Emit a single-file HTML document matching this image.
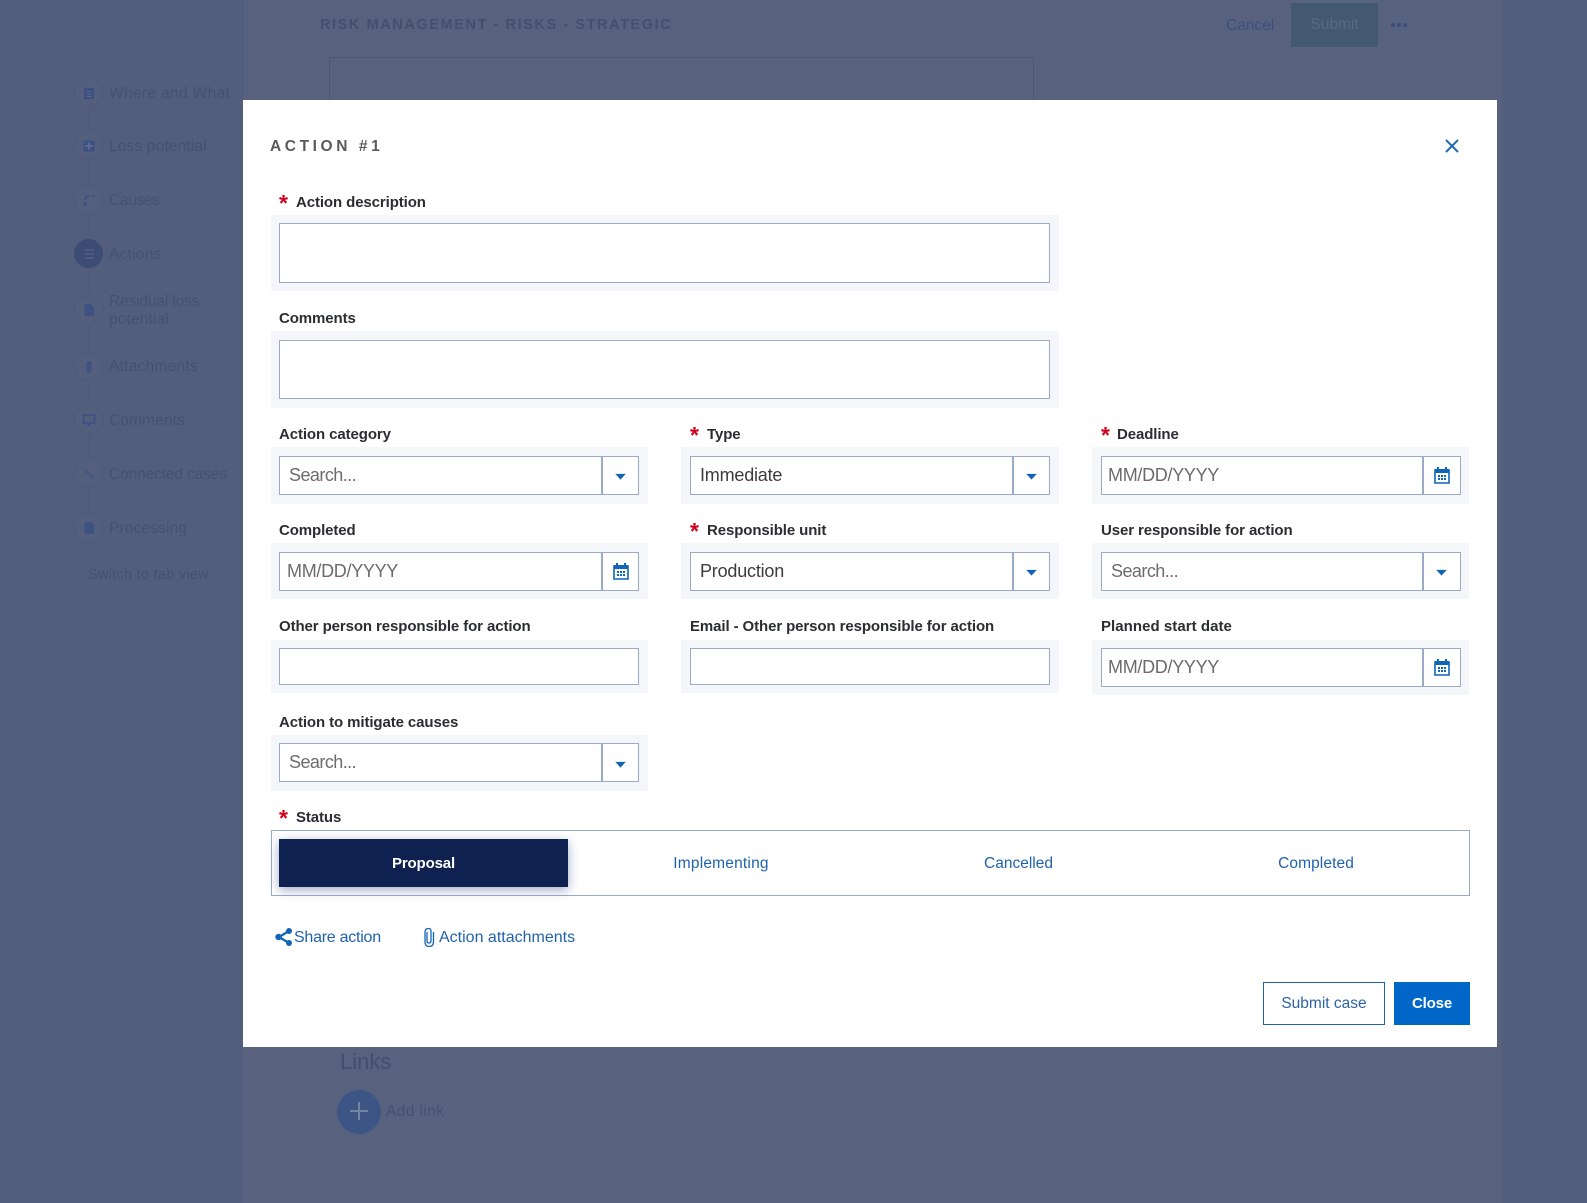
<!DOCTYPE html>
<html lang="en"><head><meta charset="utf-8"><title>Action #1</title>
<style>
*{box-sizing:border-box}
html,body{margin:0;padding:0;width:1587px;height:1203px;overflow:hidden;background:#535e7d;font-family:"Liberation Sans",sans-serif}
.a{position:absolute;white-space:nowrap}
.bgt{color:#465171;font-size:15.5px;line-height:18px;letter-spacing:.15px;margin-top:1px}
.c{position:absolute;left:74px;width:29px;height:29px;border-radius:50%;border:1px solid #4f5a7a;background:#545f7e}
.c svg{left:7px;top:7px}
.l{position:absolute;white-space:nowrap;font-size:15px;line-height:18px;font-weight:bold;color:#2b2d33;letter-spacing:-.1px;margin-top:1px}
.s{position:absolute;color:#d0021b;font-weight:bold;font-size:23px;line-height:22px;width:12px;margin-top:-2px}
.w{position:absolute;background:#f4f6fa}
.i{position:absolute;background:#fff;border:1px solid #9aabc8}
.d{position:absolute;top:0;bottom:0;width:2px;background:#9aabc8}
.p{position:absolute;white-space:nowrap;font-size:18px;line-height:22px;color:#6c6c6c;letter-spacing:-.55px}
.m{letter-spacing:-.3px}
.v{color:#3c3c3c;letter-spacing:-.2px}
.t{position:absolute;white-space:nowrap;font-size:15.5px;line-height:18px;color:#1f62ad;text-align:center;margin-top:1px}
svg{position:absolute;display:block}
</style></head><body>
<div class="a" style="left:243px;top:0;width:1259px;height:1203px;background:#58627f"></div>
<div class="a" style="left:243px;top:0;width:1px;height:100px;background:#525d7c"></div>
<div class="a" style="left:320px;top:16px;font-size:14.5px;line-height:18px;font-weight:bold;letter-spacing:1.58px;color:#454e6d">RISK MANAGEMENT - RISKS - STRATEGIC</div>
<div class="a" style="left:329px;top:57px;width:705px;height:44px;border:1px solid #4c5776"></div>
<div class="a bgt" style="left:1226px;top:16px;color:#3d4f7e;letter-spacing:0">Cancel</div>
<div class="a" style="left:1291px;top:3px;width:87px;height:44px;background:#43596f;color:#5b6984;font-size:15.5px;line-height:44px;text-align:center">Submit</div>
<div class="a" style="left:1391px;top:23px;width:4px;height:4px;border-radius:50%;background:#3d4f7e"></div>
<div class="a" style="left:1397px;top:23px;width:4px;height:4px;border-radius:50%;background:#3d4f7e"></div>
<div class="a" style="left:1403px;top:23px;width:4px;height:4px;border-radius:50%;background:#3d4f7e"></div>

<div class="a" style="left:88px;top:92px;width:1px;height:435px;background:#4f5a7a"></div>
<div class="c" style="top:78px"><svg width="14" height="14" viewBox="0 0 14 14"><path d="M2 2H12V13H2Z" fill="#3d5283"/><path d="M4.500 5.500H9.500M4.500 8H9.500M4.500 10.500H9.500" stroke="#56648a" stroke-width="1"/></svg></div>
<div class="c" style="top:131px"><svg width="14" height="14" viewBox="0 0 14 14"><path d="M1.500 1.500H12.500V12.500H1.500Z" fill="#3d5283"/><path d="M7 3.500V10.500M3.500 7H10.500" stroke="#5f6c90" stroke-width="2"/></svg></div>
<div class="c" style="top:185px"><svg width="14" height="14" viewBox="0 0 14 14"><circle cx="3" cy="11" r="2" fill="#3d5283"/><path d="M3 7Q3 3 8 3" stroke="#3d5283" stroke-width="1.500" fill="none"/><path d="M9 1.500H13V4.500H9Z" fill="#47587f"/></svg></div>
<div class="c" style="top:239px;background:#3d4c74;border-color:#3d4c74"><svg width="14" height="14" viewBox="0 0 14 14"><path d="M3 3H12M3 7H12M3 11H12" stroke="#56648a" stroke-width="1.300"/></svg></div>
<div class="c" style="top:295px"><svg width="14" height="14" viewBox="0 0 14 14"><path d="M2.500 1H9L12 4V13H2.500Z" fill="#3d5283"/></svg></div>
<div class="c" style="top:352px"><svg width="14" height="14" viewBox="0 0 14 14"><path d="M5 4V10Q5 12.500 7 12.500Q9 12.500 9 10V3.500Q9 1.500 7 1.500Q5 1.500 5 4" fill="#3f5180" stroke="#3f5180"/></svg></div>
<div class="c" style="top:405px"><svg width="14" height="14" viewBox="0 0 14 14"><path d="M1.500 2H12.500V10H8L7 12L6 10H1.500Z" fill="none" stroke="#3d5283" stroke-width="2"/></svg></div>
<div class="c" style="top:459px"><svg width="14" height="14" viewBox="0 0 14 14"><path d="M3 3.500L11 10.500" stroke="#46577f" stroke-width="2"/><circle cx="9.500" cy="9.500" r="2.500" fill="#46577f"/></svg></div>
<div class="c" style="top:513px"><svg width="14" height="14" viewBox="0 0 14 14"><path d="M2.500 1H9L12 4V13H2.500Z" fill="#3d5283"/></svg></div>
<div class="a bgt" style="left:109px;top:84px;letter-spacing:.35px">Where and What</div>
<div class="a bgt" style="left:109px;top:137px">Loss potential</div>
<div class="a bgt" style="left:109px;top:191px;letter-spacing:-.35px">Causes</div>
<div class="a bgt" style="left:109px;top:245px;letter-spacing:.25px">Actions</div>
<div class="a bgt" style="left:109px;top:292px;letter-spacing:-.15px">Residual loss</div>
<div class="a bgt" style="left:109px;top:310px">potential</div>
<div class="a bgt" style="left:109px;top:357px;letter-spacing:.25px">Attachments</div>
<div class="a bgt" style="left:109px;top:411px">Comments</div>
<div class="a bgt" style="left:109px;top:465px;letter-spacing:-.12px">Connected cases</div>
<div class="a bgt" style="left:109px;top:519px">Processing</div>
<div class="a bgt" style="left:88px;top:565px;font-size:14.5px;letter-spacing:.27px">Switch to tab view</div>

<div class="a" style="left:340px;top:1049px;font-size:22px;line-height:26px;color:#434d6e">Links</div>
<div class="a" style="left:337px;top:1090px;width:44px;height:44px;border-radius:50%;background:#3c5585"></div>
<div class="a" style="left:350px;top:1110px;width:18px;height:2px;background:#76849f"></div>
<div class="a" style="left:358px;top:1102px;width:2px;height:18px;background:#76849f"></div>
<div class="a bgt" style="left:386px;top:1102px;letter-spacing:.4px">Add link</div>

<!-- modal -->
<div class="a" style="left:243px;top:100px;width:1254px;height:947px;background:#fff"></div>
<div class="a" style="left:270px;top:138px;font-size:15.5px;line-height:18px;font-weight:bold;letter-spacing:3.6px;color:#5a5a5e">ACTION #1</div>
<svg style="left:1445px;top:139px" width="14" height="14" viewBox="0 0 14 14"><path d="M1 1L13 13M13 1L1 13" stroke="#1f6bb5" stroke-width="2" fill="none"/></svg>

<div class="s" style="left:279px;top:194px">*</div>
<div class="l" style="left:296px;top:193px">Action description</div>
<div class="w" style="left:271px;top:215px;width:788px;height:76px"></div>
<div class="i" style="left:279px;top:223px;width:771px;height:60px"></div>

<div class="l" style="left:279px;top:309px">Comments</div>
<div class="w" style="left:271px;top:331px;width:788px;height:77px"></div>
<div class="i" style="left:279px;top:340px;width:771px;height:59px"></div>

<!-- Row 1 -->
<div class="l" style="left:279px;top:425px">Action category</div>
<div class="w" style="left:271px;top:447px;width:377px;height:57px"></div>
<div class="i" style="left:279px;top:456px;width:360px;height:39px"><div class="d" style="left:321px"></div></div>
<div class="p" style="left:289px;top:464px">Search...</div>
<svg style="left:615px;top:473px" width="11" height="7" viewBox="0 0 12 8"><path d="M0 1H12L6 7.500Z" fill="#1165b8"/></svg>

<div class="s" style="left:690px;top:426px">*</div>
<div class="l" style="left:707px;top:425px">Type</div>
<div class="w" style="left:681px;top:447px;width:378px;height:57px"></div>
<div class="i" style="left:690px;top:456px;width:360px;height:39px"><div class="d" style="left:321px"></div></div>
<div class="p v" style="left:700px;top:464px">Immediate</div>
<svg style="left:1026px;top:473px" width="11" height="7" viewBox="0 0 12 8"><path d="M0 1H12L6 7.500Z" fill="#1165b8"/></svg>

<div class="s" style="left:1101px;top:426px">*</div>
<div class="l" style="left:1117px;top:425px">Deadline</div>
<div class="w" style="left:1092px;top:447px;width:377px;height:57px"></div>
<div class="i" style="left:1101px;top:456px;width:360px;height:39px"><div class="d" style="left:320px"></div></div>
<div class="p m" style="left:1108px;top:464px">MM/DD/YYYY</div>
<svg style="left:1434px;top:466px" width="16" height="18" viewBox="0 0 16 18"><path d="M1 4H15V17H1Z" fill="none" stroke="#1165b8" stroke-width="1.600"/><path d="M1 3H15V7H1Z" fill="#1165b8"/><path d="M4 1V4M12 1V4" stroke="#1165b8" stroke-width="2"/><path d="M4 9h2v2H4zM7 9h2v2H7zM10 9h2v2h-2zM4 12h2v2H4zM7 12h2v2H7zM10 12h2v2h-2z" fill="#1165b8"/></svg>

<!-- Row 2 -->
<div class="l" style="left:279px;top:521px">Completed</div>
<div class="w" style="left:271px;top:543px;width:377px;height:56px"></div>
<div class="i" style="left:279px;top:552px;width:360px;height:39px"><div class="d" style="left:321px"></div></div>
<div class="p m" style="left:287px;top:560px">MM/DD/YYYY</div>
<svg style="left:613px;top:562px" width="16" height="18" viewBox="0 0 16 18"><path d="M1 4H15V17H1Z" fill="none" stroke="#1165b8" stroke-width="1.600"/><path d="M1 3H15V7H1Z" fill="#1165b8"/><path d="M4 1V4M12 1V4" stroke="#1165b8" stroke-width="2"/><path d="M4 9h2v2H4zM7 9h2v2H7zM10 9h2v2h-2zM4 12h2v2H4zM7 12h2v2H7zM10 12h2v2h-2z" fill="#1165b8"/></svg>

<div class="s" style="left:690px;top:522px">*</div>
<div class="l" style="left:707px;top:521px">Responsible unit</div>
<div class="w" style="left:681px;top:543px;width:378px;height:56px"></div>
<div class="i" style="left:690px;top:552px;width:360px;height:39px"><div class="d" style="left:321px"></div></div>
<div class="p v" style="left:700px;top:560px">Production</div>
<svg style="left:1026px;top:569px" width="11" height="7" viewBox="0 0 12 8"><path d="M0 1H12L6 7.500Z" fill="#1165b8"/></svg>

<div class="l" style="left:1101px;top:521px">User responsible for action</div>
<div class="w" style="left:1092px;top:543px;width:377px;height:56px"></div>
<div class="i" style="left:1101px;top:552px;width:360px;height:39px"><div class="d" style="left:320px"></div></div>
<div class="p" style="left:1111px;top:560px">Search...</div>
<svg style="left:1436px;top:569px" width="11" height="7" viewBox="0 0 12 8"><path d="M0 1H12L6 7.500Z" fill="#1165b8"/></svg>

<!-- Row 3 -->
<div class="l" style="left:279px;top:617px">Other person responsible for action</div>
<div class="w" style="left:271px;top:640px;width:377px;height:53px"></div>
<div class="i" style="left:279px;top:648px;width:360px;height:37px"></div>

<div class="l" style="left:690px;top:617px">Email - Other person responsible for action</div>
<div class="w" style="left:681px;top:640px;width:378px;height:53px"></div>
<div class="i" style="left:690px;top:648px;width:360px;height:37px"></div>

<div class="l" style="left:1101px;top:617px;letter-spacing:.05px">Planned start date</div>
<div class="w" style="left:1092px;top:640px;width:377px;height:55px"></div>
<div class="i" style="left:1101px;top:648px;width:360px;height:39px"><div class="d" style="left:320px"></div></div>
<div class="p m" style="left:1108px;top:656px">MM/DD/YYYY</div>
<svg style="left:1434px;top:658px" width="16" height="18" viewBox="0 0 16 18"><path d="M1 4H15V17H1Z" fill="none" stroke="#1165b8" stroke-width="1.600"/><path d="M1 3H15V7H1Z" fill="#1165b8"/><path d="M4 1V4M12 1V4" stroke="#1165b8" stroke-width="2"/><path d="M4 9h2v2H4zM7 9h2v2H7zM10 9h2v2h-2zM4 12h2v2H4zM7 12h2v2H7zM10 12h2v2h-2z" fill="#1165b8"/></svg>

<!-- Row 4 -->
<div class="l" style="left:279px;top:713px">Action to mitigate causes</div>
<div class="w" style="left:271px;top:735px;width:377px;height:56px"></div>
<div class="i" style="left:279px;top:743px;width:360px;height:39px"><div class="d" style="left:321px"></div></div>
<div class="p" style="left:289px;top:751px">Search...</div>
<svg style="left:615px;top:761px" width="11" height="7" viewBox="0 0 12 8"><path d="M0 1H12L6 7.500Z" fill="#1165b8"/></svg>

<!-- Status -->
<div class="s" style="left:279px;top:809px">*</div>
<div class="l" style="left:296px;top:808px">Status</div>
<div class="a" style="left:271px;top:830px;width:1199px;height:66px;border:1px solid #9aabc8;background:#fff"></div>
<div class="a" style="left:279px;top:839px;width:289px;height:48px;background:#0f2150;box-shadow:0 3px 10px rgba(40,70,130,.45);color:#fff;font-size:15px;font-weight:bold;letter-spacing:-.15px;line-height:50px;text-align:center">Proposal</div>
<div class="t" style="left:661px;top:854px;width:120px;letter-spacing:.2px">Implementing</div>
<div class="t" style="left:958.500px;top:854px;width:120px">Cancelled</div>
<div class="t" style="left:1256px;top:854px;width:120px;letter-spacing:.1px">Completed</div>

<svg style="left:275px;top:928px" width="18" height="18" viewBox="0 0 18 18"><path d="M14 3L4 9L14 15" stroke="#1165b8" stroke-width="2.200" fill="none"/><circle cx="14" cy="3" r="3" fill="#1165b8"/><circle cx="3.500" cy="9" r="3.200" fill="#1165b8"/><circle cx="14" cy="15" r="3" fill="#1165b8"/></svg>
<div class="t" style="left:294px;top:928px;font-size:16px;text-align:left;letter-spacing:-.25px">Share action</div>
<svg style="left:422px;top:927px" width="14" height="21" viewBox="0 0 14 21"><path d="M5 5V14Q5 16 7 16Q9 16 9 14V4Q9 1.500 6.500 1.500Q3 1.500 3 5V14.500Q3 19.500 7 19.500Q11.500 19.500 11.500 14.500V5" stroke="#1165b8" stroke-width="1.300" fill="none"/></svg>
<div class="t" style="left:439px;top:928px;font-size:16px;text-align:left">Action attachments</div>

<div class="a" style="left:1263px;top:982px;width:122px;height:43px;border:1.500px solid #1d64a8;color:#2e62a8;font-size:15.500px;line-height:42px;text-align:center">Submit case</div>
<div class="a" style="left:1394px;top:982px;width:76px;height:43px;background:#0066c8;color:#fff;font-size:15px;font-weight:bold;letter-spacing:-.15px;line-height:43px;text-align:center">Close</div>
</body></html>
